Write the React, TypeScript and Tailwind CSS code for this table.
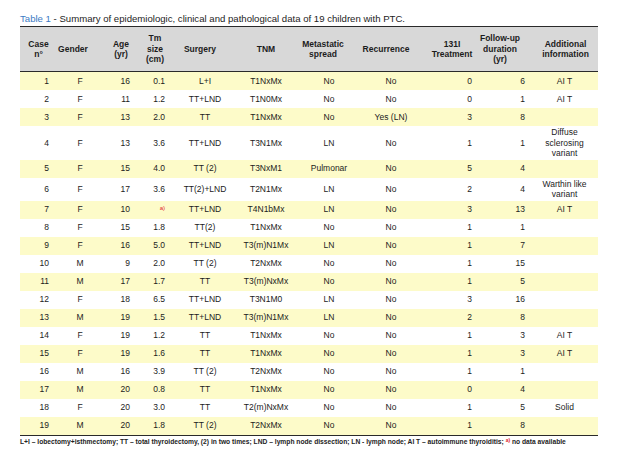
import React from "react";

type Row = {
  n: string;
  g: string;
  age: string;
  tm: string;
  surgery: string;
  tnm: string;
  spread: string;
  rec: string;
  rai: string;
  fu: string;
  info: string;
};

const rows: Row[] = [
  { n: "1", g: "F", age: "16", tm: "0.1", surgery: "L+I", tnm: "T1NxMx", spread: "No", rec: "No", rai: "0", fu: "6", info: "AI T" },
  { n: "2", g: "F", age: "11", tm: "1.2", surgery: "TT+LND", tnm: "T1N0Mx", spread: "No", rec: "No", rai: "0", fu: "1", info: "AI T" },
  { n: "3", g: "F", age: "13", tm: "2.0", surgery: "TT", tnm: "T1NxMx", spread: "No", rec: "Yes (LN)", rai: "3", fu: "8", info: "" },
  { n: "4", g: "F", age: "13", tm: "3.6", surgery: "TT+LND", tnm: "T3N1Mx", spread: "LN", rec: "No", rai: "1", fu: "1", info: "Diffuse sclerosing variant" },
  { n: "5", g: "F", age: "15", tm: "4.0", surgery: "TT (2)", tnm: "T3NxM1", spread: "Pulmonar", rec: "No", rai: "5", fu: "4", info: "" },
  { n: "6", g: "F", age: "17", tm: "3.6", surgery: "TT(2)+LND", tnm: "T2N1Mx", spread: "LN", rec: "No", rai: "2", fu: "4", info: "Warthin like variant" },
  { n: "7", g: "F", age: "10", tm: "", surgery: "TT+LND", tnm: "T4N1bMx", spread: "LN", rec: "No", rai: "3", fu: "13", info: "AI T" },
  { n: "8", g: "F", age: "15", tm: "1.8", surgery: "TT(2)", tnm: "T1NxMx", spread: "No", rec: "No", rai: "1", fu: "1", info: "" },
  { n: "9", g: "F", age: "16", tm: "5.0", surgery: "TT+LND", tnm: "T3(m)N1Mx", spread: "LN", rec: "No", rai: "1", fu: "7", info: "" },
  { n: "10", g: "M", age: "9", tm: "2.0", surgery: "TT (2)", tnm: "T2NxMx", spread: "No", rec: "No", rai: "1", fu: "15", info: "" },
  { n: "11", g: "M", age: "17", tm: "1.7", surgery: "TT", tnm: "T3(m)NxMx", spread: "No", rec: "No", rai: "1", fu: "5", info: "" },
  { n: "12", g: "F", age: "18", tm: "6.5", surgery: "TT+LND", tnm: "T3N1M0", spread: "LN", rec: "No", rai: "3", fu: "16", info: "" },
  { n: "13", g: "M", age: "19", tm: "1.5", surgery: "TT+LND", tnm: "T3(m)N1Mx", spread: "LN", rec: "No", rai: "2", fu: "8", info: "" },
  { n: "14", g: "F", age: "19", tm: "1.2", surgery: "TT", tnm: "T1NxMx", spread: "No", rec: "No", rai: "1", fu: "3", info: "AI T" },
  { n: "15", g: "F", age: "19", tm: "1.6", surgery: "TT", tnm: "T1NxMx", spread: "No", rec: "No", rai: "1", fu: "3", info: "AI T" },
  { n: "16", g: "M", age: "16", tm: "3.9", surgery: "TT (2)", tnm: "T2NxMx", spread: "No", rec: "No", rai: "1", fu: "1", info: "" },
  { n: "17", g: "M", age: "20", tm: "0.8", surgery: "TT", tnm: "T1NxMx", spread: "No", rec: "No", rai: "0", fu: "4", info: "" },
  { n: "18", g: "F", age: "20", tm: "3.0", surgery: "TT", tnm: "T2(m)NxMx", spread: "No", rec: "No", rai: "1", fu: "5", info: "Solid" },
  { n: "19", g: "M", age: "20", tm: "1.8", surgery: "TT (2)", tnm: "T2NxMx", spread: "No", rec: "No", rai: "1", fu: "8", info: "" },
];

const cols = "grid grid-cols-[37px_41px_40px_37px_57px_68px_54px_66px_60px_53px_65px]";

function NoData() {
  return <span className="text-[6px] leading-none text-[#e0242b] relative -top-[2px]">a)</span>;
}

export default function App() {
  return (
    <div className="w-[626px] h-[459px] bg-white text-[#1c1c1c] font-['Liberation_Sans',Arial,sans-serif] pt-[13px] pl-[20px]">
      {/* Caption */}
      <p className="text-[9.6px] leading-[12px] mb-[1px] whitespace-nowrap">
        <span className="text-[#3b7bc4]">Table 1</span> - Summary of epidemiologic, clinical and pathological data of 19
        children with PTC.
      </p>

      <div className="w-[578px]">
        {/* Header */}
        <div className={`${cols} bg-[#d8d8d8] border-t-[1.5px] border-b border-[#2a2a2a] h-[46px] text-[8.5px] leading-[10.5px] font-bold text-center whitespace-nowrap`}>
          <div className="flex items-center justify-center">Case<br />n°</div>
          <div className="flex items-center justify-center pr-[9px]">Gender</div>
          <div className="flex items-center justify-center pl-[6px]">Age<br />(yr)</div>
          <div className="flex items-center justify-center pr-[3px]">Tm<br />size<br />(cm)</div>
          <div className="flex items-center justify-center pr-[7px]">Surgery</div>
          <div className="flex items-center justify-center">TNM</div>
          <div className="flex items-center justify-center pr-[8px]">Metastatic<br />spread</div>
          <div className="flex items-center justify-center pr-[2px]">Recurrence</div>
          <div className="flex items-center justify-center pl-[4px]">131I<br />Treatment</div>
          <div className="flex items-center justify-center pr-[13px]">Follow-up<br />duration<br />(yr)</div>
          <div className="flex items-center justify-center">Additional<br />information</div>
        </div>

        {/* Body */}
        {rows.map((r, i) => (
          <div
            key={r.n}
            className={`${cols} min-h-[18px] py-[1px] text-[8.5px] leading-[10.5px] ${i % 2 === 0 ? "bg-[#fdfbc9]" : "bg-white"}`}
          >
            <div className="flex items-center justify-end pr-[8px]">{r.n}</div>
            <div className="flex items-center justify-center pl-[5px]">{r.g}</div>
            <div className="flex items-center justify-end pr-[8px]">{r.age}</div>
            <div className="flex items-center justify-end pr-[10px]">{r.tm || <NoData />}</div>
            <div className="flex items-center justify-center pl-[3px]">{r.surgery}</div>
            <div className="flex items-center justify-center">{r.tnm}</div>
            <div className="flex items-center justify-center pl-[4px]">{r.spread}</div>
            <div className="flex items-center justify-center pl-[8px]">{r.rec}</div>
            <div className="flex items-center justify-end pr-[8px]">{r.rai}</div>
            <div className="flex items-center justify-end pr-[8px]">{r.fu}</div>
            <div className="flex items-center justify-center text-center pr-[4px] pl-[2px]">{r.info}</div>
          </div>
        ))}

        {/* Footnote */}
        <p className="border-t border-[#2a2a2a] pt-[1px] text-[6.7px] leading-[9px] font-bold whitespace-nowrap text-[#222]">
          L+I – lobectomy+isthmectomy; TT – total thyroidectomy, (2) in two times; LND – lymph node dissection; LN - lymph
          node; AI T – autoimmune thyroiditis; <span className="text-[#e0242b] text-[5px] relative -top-[2px]">a)</span> no
          data available
        </p>
      </div>
    </div>
  );
}
